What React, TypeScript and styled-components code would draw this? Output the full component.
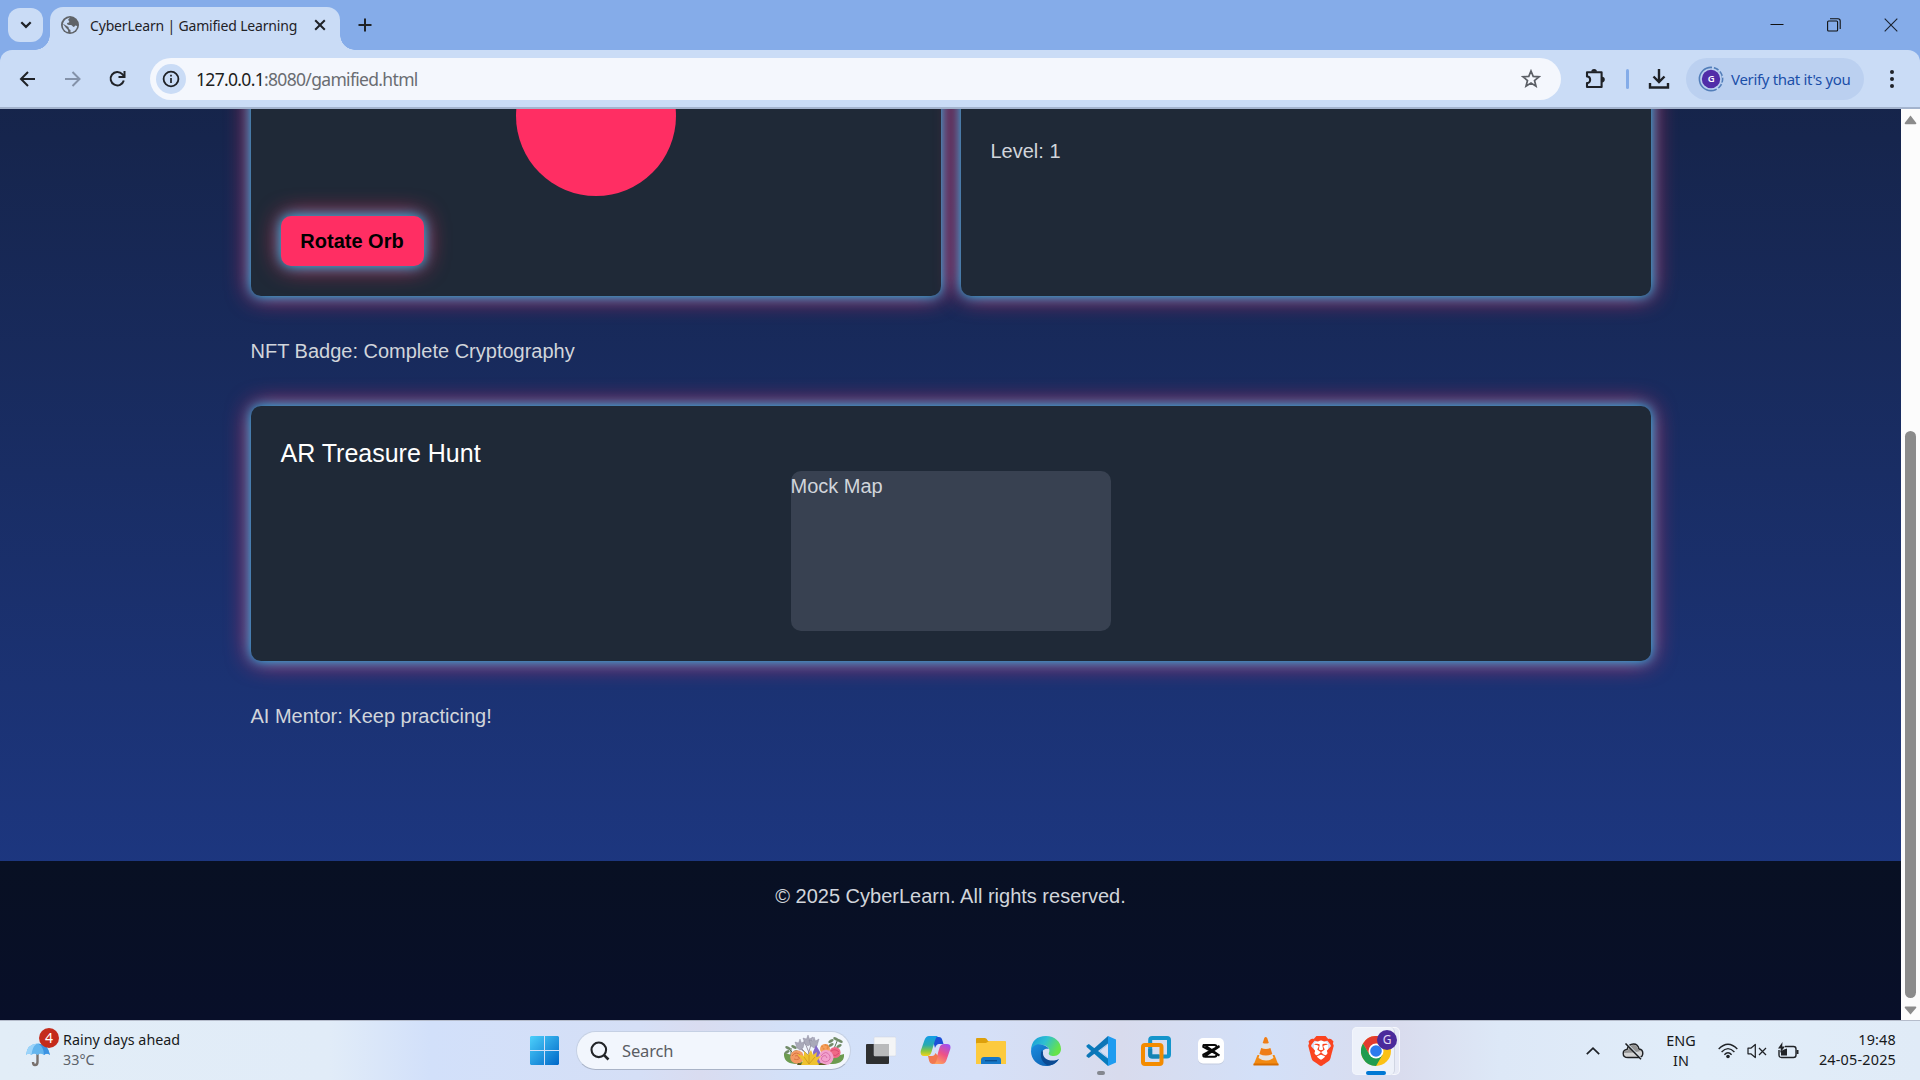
import React from "react";
import styled, { createGlobalStyle } from "styled-components";
import { SiBrave } from "react-icons/si";

const GlobalStyle = createGlobalStyle`
  * { box-sizing: border-box; }
  html, body { margin: 0; padding: 0; overflow: hidden; }
  p, h3 { margin: 0; }
  svg { display: block; flex: none; }
`;

const ui = `"Noto Sans", "Open Sans", sans-serif`;
const web = `"Liberation Sans", Arial, sans-serif`;

const Screen = styled.div`
  width: 1920px;
  height: 1080px;
  display: flex;
  flex-direction: column;
  overflow: hidden;
  font-family: ${ui};
`;

/* Tab strip */
const TabStrip = styled.header`
  height: 50px;
  flex: none;
  display: flex;
  align-items: flex-start;
  background: #85ace9;
  padding: 7px 0 0 8px;
`;
const TabSearch = styled.div`
  width: 35px;
  height: 34px;
  margin-top: 1px;
  border-radius: 12px;
  background: #cadcf6;
  display: grid;
  place-items: center;
`;
const Tab = styled.div`
  position: relative;
  margin-left: 7px;
  width: 290px;
  height: 43px;
  border-radius: 13px 13px 0 0;
  background: #cadcf6;
  display: flex;
  align-items: center;
  padding: 0 14px 7px 11px;
  &::before,
  &::after {
    content: "";
    position: absolute;
    bottom: 0;
    width: 15px;
    height: 15px;
  }
  &::before {
    left: -15px;
    background: radial-gradient(circle at 0 0, transparent 14.5px, #cadcf6 15px);
  }
  &::after {
    right: -15px;
    background: radial-gradient(circle at 100% 0, transparent 14.5px, #cadcf6 15px);
  }
`;
const TabTitle = styled.span`
  flex: 1;
  margin-left: 11px;
  padding-top: 1px;
  font-size: 14px;
  letter-spacing: -0.18px;
  line-height: 20px;
  color: #1f2227;
  white-space: nowrap;
`;
const NewTab = styled.div`
  margin: 11px 0 0 18px;
`;
const WindowButtons = styled.div`
  margin-left: auto;
  margin-right: 1px;
  display: flex;
  width: 171px;
  height: 35px;
`;
const WindowButton = styled.div`
  width: 57px;
  height: 35px;
  display: grid;
  place-items: center;
`;

/* Toolbar */
const ToolbarBack = styled.div`
  height: 59px;
  flex: none;
  background: #85ace9;
`;
const Toolbar = styled.div`
  height: 59px;
  background: #cadcf6;
  border-radius: 12px 12px 0 0;
  border-bottom: 2px solid #a3b3cd;
  display: flex;
  align-items: center;
  padding: 0 18px;
`;
const NavButtons = styled.div`
  width: 132px;
  display: flex;
  gap: 25px;
`;
const AddressBar = styled.div`
  width: 1411px;
  height: 42px;
  margin-top: 1px;
  border-radius: 21px;
  background: #f4f7fd;
  display: flex;
  align-items: center;
  padding: 0 20px 0 6px;
`;
const SiteInfo = styled.div`
  width: 30px;
  height: 30px;
  border-radius: 50%;
  background: #cadcf6;
  display: grid;
  place-items: center;
`;
const Url = styled.div`
  flex: 1;
  margin-left: 10px;
  font-size: 17.5px;
  letter-spacing: -0.68px;
  line-height: 24px;
  color: #6a6d72;
  white-space: nowrap;
`;
const UrlHost = styled.span`
  color: #1c1e21;
`;
const ToolbarDivider = styled.div`
  width: 3px;
  height: 20px;
  border-radius: 2px;
  background: #84ace8;
  margin: 0 19px 0 20px;
`;
const ProfileChip = styled.div`
  width: 178px;
  height: 42px;
  border-radius: 21px;
  background: #bbd0f0;
  margin-left: 16px;
  display: flex;
  align-items: center;
  padding-left: 12px;
  gap: 7px;
  font-size: 15px;
  letter-spacing: -0.32px;
  color: #1c4fa8;
  white-space: nowrap;
`;

/* Page */
const Viewport = styled.div`
  height: 911px;
  flex: none;
  display: flex;
  overflow: hidden;
`;
const Page = styled.div`
  width: 1901px;
  display: flex;
  flex-direction: column;
  overflow: hidden;
  background: linear-gradient(to bottom, #111827 -519px, #1e3a8a 911px);
  font-family: ${web};
  font-size: 20px;
  line-height: 30px;
  color: #d1d5db;
`;
const Main = styled.main`
  width: 1400px;
  height: 752px;
  flex: none;
  margin: 0 auto;
`;
const CardRow = styled.section`
  display: grid;
  grid-template-columns: 1fr 1fr;
  gap: 20px;
  margin-top: -123px;
`;
const glow = `0 0 12.5px #00d4ff, 0 0 25px #ff2e63`;
const Card = styled.article<{ $height: number }>`
  height: ${(p) => p.$height}px;
  padding: 30px;
  border-radius: 10px;
  background: #1f2937;
  box-shadow: ${glow};
`;
const Orb = styled.div`
  width: 160px;
  height: 160px;
  margin: 20px auto;
  border-radius: 50%;
  background: #ff2e63;
`;
const OrbButton = styled.button`
  display: block;
  width: 143px;
  height: 50px;
  padding: 0;
  border: 0;
  border-radius: 10px;
  background: #ff2e63;
  box-shadow: ${glow};
  font: bold 20px/30px ${web};
  color: #000;
`;
const Level = styled.p`
  margin-top: 120px;
`;
const Note = styled.p`
  margin: 40px 0;
`;
const CardTitle = styled.h3`
  font-size: 25px;
  font-weight: 400;
  line-height: 35px;
  color: #fff;
`;
const MockMap = styled.div`
  width: 320px;
  height: 160px;
  margin: 0 auto;
  border-radius: 10px;
  background: #384151;
`;
const Footer = styled.footer`
  flex: 1;
  padding-top: 20px;
  text-align: center;
  background: linear-gradient(#081023, #080f29);
`;

const Scrollbar = styled.div`
  width: 19px;
  background: #fcfcfc;
  display: flex;
  flex-direction: column;
  align-items: center;
  padding: 6px 0 5px;
`;
const ScrollThumb = styled.div`
  width: 11px;
  height: 567px;
  margin: auto 0 8px;
  border-radius: 6px;
  background: #8b8b8b;
`;

/* Taskbar */
const Taskbar = styled.footer`
  height: 60px;
  flex: none;
  border-top: 1px solid #b5bccb;
  display: flex;
  align-items: center;
  padding: 0 24px;
  background: linear-gradient(
    90deg,
    #e2edf7 0,
    #e1ecf8 330px,
    #d2e0fa 430px,
    #d5dff6 640px,
    #d9dcf0 700px,
    #d2e1f9 800px,
    #d5e0f8 980px,
    #d8dbed 1120px,
    #d3e0f8 1260px,
    #d9dcee 1400px,
    #dde8f7 1500px,
    #e1edf9 1700px,
    #e0ebf7 1920px
  );
`;
const Weather = styled.div`
  width: 496px;
  height: 59px;
  display: flex;
  align-items: center;
  gap: 3px;
  padding-bottom: 1px;
`;
const WeatherIcon = styled.div`
  position: relative;
  width: 36px;
  height: 48px;
  padding-top: 16px;
`;
const WeatherBadge = styled.div`
  position: absolute;
  left: 15px;
  top: 2px;
  width: 20px;
  height: 20px;
  border-radius: 50%;
  background: #c42b1c;
  color: #fff;
  font-size: 14px;
  line-height: 20px;
  text-align: center;
`;
const WeatherText = styled.div<{ $muted?: boolean }>`
  font-size: 14.3px;
  line-height: 20px;
  letter-spacing: 0.02px;
  color: ${(p) => (p.$muted ? "#5c6269" : "#17191b")};
  white-space: nowrap;
`;
const TaskCell = styled.div<{ $active?: boolean }>`
  position: relative;
  width: ${(p) => (p.$active ? 48 : 55)}px;
  height: 48px;
  flex: none;
  display: grid;
  place-items: center;
`;
const ActiveTile = styled.div`
  width: 48px;
  height: 48px;
  display: grid;
  border-radius: 5px;
  background: rgba(240, 243, 251, 0.6);
  border: 1px solid rgba(255, 255, 255, 0.65);
`;
const FrontTile = styled.div`
  width: 43px;
  height: 48px;
  margin: -1px 0 0 -1px;
  padding: 9px 0 0 9px;
  border-radius: 5px;
  background: rgba(240, 243, 251, 0.7);
  border-right: 1px solid #d0d5e2;
`;
const RunMark = styled.i<{ $active?: boolean }>`
  position: absolute;
  bottom: 0;
  left: 50%;
  width: ${(p) => (p.$active ? 20 : 8)}px;
  height: 4px;
  transform: translateX(-50%);
  border-radius: 2px;
  background: ${(p) => (p.$active ? "#0078d4" : "#84878f")};
`;
const Account = styled.div`
  position: absolute;
  right: 3px;
  top: 3px;
  width: 20px;
  height: 20px;
  border-radius: 50%;
  background: #4b2a9b;
  color: #e4dcf5;
  font-size: 12px;
  line-height: 20px;
  text-align: center;
`;
const SearchBox = styled.div`
  width: 275px;
  height: 39px;
  flex: none;
  margin: 0 2px 0 7px;
  border-radius: 20px;
  background: #f2f6fd;
  border: 1px solid #c5d0e4;
  border-bottom-color: #a9b3c7;
  display: flex;
  align-items: center;
  padding: 0 5px 0 13px;
  overflow: hidden;
`;
const SearchText = styled.span`
  flex: 1;
  margin-left: 12px;
  font-size: 16.5px;
  letter-spacing: -0.15px;
  line-height: 24px;
  color: #5a5d63;
`;
const StartCell = styled.div`
  width: 49px;
  height: 48px;
  flex: none;
  display: grid;
  place-items: center;
`;
const Tray = styled.div`
  margin-left: auto;
  display: flex;
  align-items: center;
  height: 59px;
`;
const TrayGap = styled.div<{ $w: number }>`
  width: ${(p) => p.$w}px;
  display: grid;
  place-items: center;
`;
const TrayText = styled.div<{ $right?: boolean; $w: number }>`
  width: ${(p) => p.$w}px;
  font-size: 14.4px;
  letter-spacing: ${(p) => (p.$right ? "0.2px" : "0")};
  line-height: 20px;
  padding-bottom: ${(p) => (p.$right ? 2 : 0)}px;
  text-align: ${(p) => (p.$right ? "right" : "center")};
  color: #17191b;
  white-space: nowrap;
`;

const line = { fill: "none", stroke: "#1f2227", strokeWidth: 2 } as const;

const Globe = () => (
  <svg width="18" height="18" viewBox="0 0 18 18">
    <circle cx="9" cy="9" r="9" fill="#5f6368" />
    <path d="M9.3 1.8 C7 2.6 6.8 4 8 5 C9 6 7.5 7 6 7 C6 9 7.5 9 9.5 9 C11.5 9 11.5 11 13 11 L14.3 9.5 L16.2 10 C15.5 14 12.5 16.3 9.5 16.3 L9.5 14 C8 13.5 7.5 12 7.5 11 L2 7.8 C1 11.5 3.8 15.8 7.2 16.1 L7 14 C5.5 12.5 4 10.5 2 8 C3 4 6 1.8 9.3 1.8Z" fill="#cadcf6" />
  </svg>
);
const Back = () => (
  <svg width="20" height="20" viewBox="0 0 20 20" {...line}>
    <path d="M17 10H3M10 3L3 10L10 17" />
  </svg>
);
const Forward = () => (
  <svg width="20" height="20" viewBox="0 0 20 20" fill="none" stroke="#8492a9" strokeWidth="2">
    <path d="M2 10H16M9.5 3L16.5 10L9.5 17" />
  </svg>
);
const Reload = () => (
  <svg width="20" height="20" viewBox="0 0 20 20" {...line}>
    <path d="M15.8 11.5A6.7 6.7 0 1 1 14.3 5.2L16.5 7.4" />
    <path d="M16.5 2V8H10.5" />
  </svg>
);
const Info = () => (
  <svg width="18" height="18" viewBox="0 0 18 18">
    <circle cx="9" cy="9" r="7.4" fill="none" stroke="#1f2227" strokeWidth="1.8" />
    <path d="M9 8V13M9 4.8V6.6" stroke="#1f2227" strokeWidth="1.7" />
  </svg>
);
const Star = () => (
  <svg width="20" height="20" viewBox="0 0 20 20">
    <path d="M10 2L12.2 7.4L18 7.8L13.5 11.5L15 17.2L10 14.1L5 17.2L6.5 11.5L2 7.8L7.8 7.4Z" fill="none" stroke="#5b5f66" strokeWidth="1.7" />
  </svg>
);
const Puzzle = () => (
  <svg width="22" height="22" viewBox="0 0 22 22">
    <path d="M3 4.3H17.6V19H3V15.1C7.2 15.2 7.2 8.5 3 8.5Z" fill="none" stroke="#1f2227" strokeWidth="2.1" strokeLinejoin="round" />
    <path d="M7.3 3.8A2.8 2.8 0 0 1 12.9 3.8ZM18 8.8A2.8 2.8 0 0 1 18 14.4Z" fill="#1f2227" />
  </svg>
);
const Download = () => (
  <svg width="22" height="22" viewBox="0 0 22 22" fill="none" stroke="#1f2227" strokeWidth="2.4">
    <path d="M11 1V13.5M5.5 8.5L11 14L16.5 8.5M2 15V19.5H20V15" />
  </svg>
);
const Avatar = () => (
  <svg width="26" height="26" viewBox="0 0 26 26">
    <circle cx="13" cy="13" r="11.6" fill="none" stroke="#527eb9" strokeWidth="1.6" />
    <path d="M14 1.4A11.6 11.6 0 0 1 14 24.6" fill="none" stroke="#bbd0f0" strokeWidth="3" strokeDasharray="2 5.3" />
    <circle cx="13" cy="13" r="9.2" fill="#512da8" />
    <text x="13" y="16.4" textAnchor="middle" fontSize="9.5" fontWeight="600" fill="#fff" fontFamily="Noto Sans, sans-serif">G</text>
  </svg>
);
const Menu = () => (
  <svg width="6" height="20" viewBox="0 0 6 20" fill="#1f2227">
    <circle cx="3" cy="3" r="2" />
    <circle cx="3" cy="10" r="2" />
    <circle cx="3" cy="17" r="2" />
  </svg>
);

const Umbrella = () => (
  <svg width="28" height="28" viewBox="0 0 28 28">
    <path d="M13.5 10V20Q13.5 23 11 23Q9 23 9 20" fill="none" stroke="#78716e" strokeWidth="2.4" />
    <path d="M2 13Q3 2 13.5 1.5Q24 2 26 13Q23 10.5 20 13Q16.5 10.5 13.5 13Q10 10.5 7.5 13Q4.5 10.5 2 13Z" fill="#63b5ee" />
    <path d="M2 13Q3 2 13 1.5Q8 5 7.5 13Q4.5 10.5 2 13Z" fill="#9bd4fa" />
    <path d="M14 1.5Q24 2 26 13Q23 10.5 20 13Q20 5 14 1.5Z" fill="#3c93e2" />
  </svg>
);
const WindowsLogo = () => (
  <svg width="29" height="29" viewBox="0 0 29 29">
    <defs>
      <linearGradient id="win" x1="0" y1="0" x2="1" y2="1">
        <stop offset="0" stopColor="#4cd0fb" />
        <stop offset="1" stopColor="#0067c8" />
      </linearGradient>
    </defs>
    <path d="M1 0H14V14H0V1ZM15 0H28L29 1V14H15ZM0 15H14V29H1L0 28ZM15 15H29V28L28 29H15Z" fill="url(#win)" />
  </svg>
);
const Magnifier = () => (
  <svg width="20" height="20" viewBox="0 0 20 20" fill="none" stroke="#222428" strokeWidth="2.1">
    <circle cx="8.8" cy="8.8" r="7.3" />
    <path d="M13.8 13.8L18.5 18.5" strokeWidth="2.6" />
  </svg>
);
const petals = [0, 30, 60, 90, 120, 150];
const Flowers = () => (
  <svg width="62" height="32" viewBox="0 0 62 32">
    <path d="M1 18Q0 28 12 29L22 29Q14 20 1 18ZM61 19Q62 28 50 29L40 29Q48 22 61 19Z" fill="#6c9b50" />
    <path d="M8 21L8 13M50 16L55 4M14 22L5 13" stroke="#5a7355" strokeWidth="1" />
    {[[5, 13], [11, 12], [4, 17], [12, 17], [48, 6], [57, 6], [48, 10], [56, 11], [53, 4]].map(([x, y]) => (
      <ellipse key={`${x}-${y}`} cx={x} cy={y} rx="3" ry="1.5" fill="#718b68" transform={`rotate(${x % 2 ? 25 : -30} ${x} ${y})`} />
    ))}
    <path d="M17 12L25 20L29 6M22 8L27 20M14 11L25 20" stroke="#837b8b" strokeWidth="0.8" fill="none" />
    {[[17, 9], [25, 5], [31, 7]].map(([x, y]) => (
      <path key={x} d={`M${x} ${y - 5}L${x + 1.5} ${y - 1}L${x + 5} ${y - 3}L${x + 3} ${y + 4}L${x} ${y + 6}L${x - 3} ${y + 4}L${x - 5} ${y - 2}L${x - 1.5} ${y - 1}Z`} fill="#a9a9b9" stroke="#85849a" strokeWidth="0.4" />
    ))}
    <path d="M31 28L30 17L33 10L37 17L38 28Z" fill="#8369c8" />
    <circle cx="42" cy="14" r="5" fill="#f5a15f" />
    <circle cx="52" cy="17.5" r="5.6" fill="#ef6986" />
    <path d="M48 16Q52 13 56 17M49 20Q53 22 56 18" stroke="#d94a70" fill="none" />
    <circle cx="14" cy="22" r="6.8" fill="#f39a64" />
    <path d="M9 21Q13 15 18 21Q16 26 11 24M12 21Q15 19 16 23" stroke="#d9743f" fill="none" />
    <circle cx="43" cy="22.5" r="7.5" fill="#f2a1cc" />
    <path d="M38 21Q43 14 47 21Q48 26 42 27Q36 25 40 21Q43 19 44 23" stroke="#d870a8" fill="none" />
    <path d="M15 28Q27 30 38 28L44 30H14Z" fill="#5b5a20" />
    <path d="M14 19L21 21L21 16L25 20L28 15L30 20L34 17L33 22L38 21L34 26L36 30H18L20 26Z" fill="#eec22f" />
    <path d="M26 29L21 22M26 29L26 20M26 29L32 22" stroke="#cb951e" strokeWidth="0.8" />
    {petals.map((a) => (
      <circle key={a} cx={42 + 3 * Math.cos(a)} cy={12 + 2 * Math.sin(a)} r="1" fill="#e98b42" />
    ))}
  </svg>
);
const TaskView = () => (
  <svg width="30" height="30" viewBox="0 0 30 30">
    <rect x="0" y="8" width="23" height="20" rx="1" fill="#2e2f30" />
    <rect x="8" y="1" width="22" height="19" rx="1" fill="#f4f5f6" stroke="#cfd3dc" strokeWidth="0.5" />
    <path d="M8 8H23V20H8Z" fill="#b9babb" />
  </svg>
);
const Copilot = () => (
  <svg width="31" height="29" viewBox="0 0 31 29">
    <defs>
      <linearGradient id="cpA" x1="0" y1="0" x2="0" y2="1">
        <stop offset="0" stopColor="#139ce8" />
        <stop offset=".45" stopColor="#27aab0" />
        <stop offset=".75" stopColor="#8bc83e" />
        <stop offset="1" stopColor="#f3d21c" />
      </linearGradient>
      <linearGradient id="cpB" x1=".8" y1="0" x2=".3" y2="1">
        <stop offset="0" stopColor="#a04ff0" />
        <stop offset=".5" stopColor="#ee5286" />
        <stop offset="1" stopColor="#ffa05b" />
      </linearGradient>
    </defs>
    <path d="M12 1H19Q21.5 1 22.3 4L23.5 8H19Q16.5 8 15 12Z" fill="#1b50d8" />
    <path d="M9 0H18Q15.8 1 14.8 5L11.5 16Q10.3 20 7.5 20H4Q0 20 .7 15L4.5 4Q6 0 9 0Z" fill="url(#cpA)" />
    <path d="M22 28H13Q15.3 27 16.3 23L19.4 12Q20.5 8 24 8H27Q31.3 8 30.3 13L26.5 24Q25.3 28 22 28Z" fill="url(#cpB)" />
    <path d="M8 20H12Q14.5 20 15.5 17L18 20L16 26Q15 28 13 28Q10 28 9.2 25Z" fill="#f27850" />
  </svg>
);
const Folder = () => (
  <svg width="30" height="28" viewBox="0 0 30 28">
    <path d="M0 2Q0 1 1 1H9Q10.5 1 12 4H28Q30 4 30 6V20H0Z" fill="#dda00b" />
    <path d="M0 7Q0 6 1 6H10L13 4H29Q30 4 30 6V27H0Z" fill="#fcca3e" />
    <path d="M5 27V23Q5 20 8 20H22Q25 20 25 23V27Z" fill="#1678c8" />
    <path d="M9 23.7H21" stroke="#0b4f8e" strokeWidth="1.3" />
  </svg>
);
const Edge = () => (
  <svg width="30" height="30" viewBox="0 0 30 30">
    <defs>
      <linearGradient id="edA" x1="0" y1="0" x2="1" y2=".4">
        <stop offset="0" stopColor="#1598d9" />
        <stop offset=".5" stopColor="#2ebfd2" />
        <stop offset="1" stopColor="#67e34a" />
      </linearGradient>
      <linearGradient id="edB" x1="0" y1="0" x2="1" y2="1">
        <stop offset="0" stopColor="#1b8de0" />
        <stop offset="1" stopColor="#0c58a8" />
      </linearGradient>
    </defs>
    <path d="M0 15C0 5 6 0 15 0C24 0 30 6 30 13C30 17 27 20 23 20C19 20 17 18.5 18 16.5C19.5 13 17 10 12 9C7 8 2 10 0 15Z" fill="url(#edA)" />
    <path d="M0 15C1 9 7 7 12 9C15 10 17 11 18 13C13 12 11 15 11 18C11 26 21 28 28 23C25 28 20 30 15 30C6 30 0 23 0 15Z" fill="url(#edB)" />
    <path d="M11 14C8 20 11 28 18 29.6C22 29 26 26 28 23C20 27 11 23 12 16Z" fill="#0b4a92" />
  </svg>
);
const VsCode = () => (
  <svg width="30" height="30" viewBox="0 0 30 30">
    <path d="M.5 9.5L2.8 8L24 24L22 30L.6 11Z" fill="#087bbd" />
    <path d="M.5 20.5L2.8 22L24 6L22 0L.6 19Z" fill="#0c75b7" />
    <path d="M22 0L30 3.5V26.5L22 30V21.5L13.5 15L22 8.5Z" fill="#1f9cf0" />
    <path d="M22 8.5V21.5L13.5 15Z" fill="#d7def2" />
  </svg>
);
const Vmware = () => (
  <svg width="30" height="30" viewBox="0 0 30 30" fill="none" strokeWidth="4">
    <rect x="9.2" y="2" width="18.8" height="18.5" rx="2" stroke="#1595cb" />
    <rect x="2" y="9" width="18.5" height="19" rx="2" stroke="#f38b00" />
    <path d="M9.2 13V18.5Q9.2 20.5 11.2 20.5H18" stroke="#1583b4" />
  </svg>
);
const CapCut = () => (
  <svg width="28" height="28" viewBox="0 0 28 28">
    <rect x="1" y="1.5" width="26" height="26" rx="5" fill="#aab1c1" opacity=".4" />
    <rect x="1" y="1" width="26" height="25.5" rx="5" fill="#fff" />
    <path d="M22.5 9.5L8 19.2Q6.3 20.2 6.3 18.5V17.5L22.5 9M22.5 18.5L8 8.3Q6.3 7.2 6.3 9V10L22.5 18.5M7.5 8H17.5Q19.5 8 19.5 10M7.5 19.7H17.5Q19.5 19.7 19.5 17.7" fill="none" stroke="#090909" strokeWidth="2" />
  </svg>
);
const Vlc = () => (
  <svg width="26" height="30" viewBox="0 0 26 30">
    <path d="M4.5 19H21.5L25.5 29H.5Z" fill="#f28a13" />
    <path d="M.5 27.5H25.5V29.5H.5Z" fill="#d76c00" />
    <path d="M11.3 2Q12.5 0 14.2 2L20.5 22Q13 27 5.5 22Z" fill="#e4e3e4" />
    <path d="M11.3 2Q12.5 0 14.2 2L15.8 7Q12.8 8 9.7 7ZM8.2 12Q13 14 17.4 12L19.3 18Q13 21 6.4 18Z" fill="#ef7d16" />
  </svg>
);
const Brave = () => (
  <svg width="30" height="30" viewBox="0 0 30 30">
    <path d="M8 7L15 4L22 7L22 17L15 25L8 17Z" fill="#fff" />
    <SiBrave size={30} color="#fb4420" />
  </svg>
);
const Chrome = () => (
  <svg width="30" height="30" viewBox="0 0 30 30">
    <circle cx="15" cy="15" r="15" fill="#fbc116" />
    <path d="M2 7.5A15 15 0 0 1 28 7.5H15L8.5 18.7Z" fill="#e33b2e" />
    <path d="M2 7.5A15 15 0 0 0 15 30L21.5 18.7L8.5 18.7Z" fill="#209c50" />
    <circle cx="15" cy="15" r="7.5" fill="#fff" />
    <circle cx="15" cy="15" r="5.8" fill="#2c7bee" />
  </svg>
);

const CloudOff = () => (
  <svg width="22" height="18" viewBox="0 0 22 18">
    <path d="M6 15.5Q1.2 15.5 1.2 11.5Q1.2 8 5 7.5Q6.5 2 11.5 2Q16 2 17 7Q20.8 7.5 20.8 11.3Q20.8 15.5 16.5 15.5Z" fill="#d2d2d2" stroke="#1d1f22" strokeWidth="1.4" />
    <path d="M2 11Q2 8 6 8.5Q7 3 11.5 3Q15.3 3 16.3 7.5L18.5 9L12 10.5Z" fill="#939393" />
    <path d="M5.2 2L19.8 17" stroke="#e1edf8" strokeWidth="1.4" />
    <path d="M3.5 1.5L19 17.3" stroke="#1d1f22" strokeWidth="1.6" />
  </svg>
);
const Wifi = () => (
  <svg width="20" height="16" viewBox="0 0 20 16" fill="none" stroke="#202327" strokeWidth="1.4">
    <path d="M.7 6Q10-3.6 19.3 6M3.6 9Q10 2.3 16.4 9M6.4 11.7Q10 7.8 13.6 11.7" />
    <circle cx="10" cy="13.5" r="1.8" fill="#202327" stroke="none" />
  </svg>
);
const Muted = () => (
  <svg width="20" height="16" viewBox="0 0 20 16" fill="none" stroke="#202327" strokeWidth="1.25">
    <path d="M1 5.2H3.8L8.3 1.5V14.5L3.8 10.8H1Z" strokeLinejoin="round" />
    <path d="M12 5L19 12M19 5L12 12" />
  </svg>
);
const Battery = () => (
  <svg width="21" height="18" viewBox="0 0 21 18">
    <path d="M7 4.5H15.5Q18 4.5 18 7V13Q18 15.5 15.5 15.5H3.5Q1 15.5 1 13V8" fill="none" stroke="#202327" strokeWidth="1.4" />
    <path d="M3 9L6 7.5L9 6.5V13.5H3ZM18.5 8H20.5V12H18.5Z" fill="#202327" />
    <path d="M4.5 0L0 6.5H3L2 11L7 4.5H4.2Z" fill="#202327" />
  </svg>
);

const apps: { name: string; icon: React.ReactNode; running?: boolean }[] = [
  { name: "task-view", icon: <TaskView /> },
  { name: "copilot", icon: <Copilot /> },
  { name: "explorer", icon: <Folder /> },
  { name: "edge", icon: <Edge /> },
  { name: "vscode", icon: <VsCode />, running: true },
  { name: "vmware", icon: <Vmware /> },
  { name: "capcut", icon: <CapCut /> },
  { name: "vlc", icon: <Vlc /> },
  { name: "brave", icon: <Brave /> },
];

export default function App() {
  return (
    <Screen>
      <GlobalStyle />
      <TabStrip>
        <TabSearch>
          <svg width="12" height="8" viewBox="0 0 12 8" {...line} strokeWidth="2.2">
            <path d="M1.3 1.2L6 5.9L10.7 1.2" />
          </svg>
        </TabSearch>
        <Tab>
          <Globe />
          <TabTitle>CyberLearn | Gamified Learning</TabTitle>
          <svg width="12" height="12" viewBox="0 0 12 12" {...line}>
            <path d="M1.2 1.2L10.8 10.8M10.8 1.2L1.2 10.8" />
          </svg>
        </Tab>
        <NewTab>
          <svg width="14" height="14" viewBox="0 0 14 14" {...line}>
            <path d="M7 .5V13.5M.5 7H13.5" />
          </svg>
        </NewTab>
        <WindowButtons>
          <WindowButton>
            <svg width="14" height="14" viewBox="0 0 14 14">
              <path d="M.5 6.5H13.5" stroke="#111" />
            </svg>
          </WindowButton>
          <WindowButton>
            <svg width="14" height="14" viewBox="0 0 14 14" fill="none" stroke="#111" strokeWidth="1.1">
              <rect x=".6" y="3" width="10" height="10" rx="1" />
              <path d="M3 .8H11Q13.2 .8 13.2 3V11" />
            </svg>
          </WindowButton>
          <WindowButton>
            <svg width="14" height="14" viewBox="0 0 14 14" stroke="#1a2230" strokeWidth="1.1">
              <path d="M.7 .7L13.3 13.3M13.3 .7L.7 13.3" />
            </svg>
          </WindowButton>
        </WindowButtons>
      </TabStrip>
      <ToolbarBack>
        <Toolbar>
          <NavButtons>
            <Back />
            <Forward />
            <Reload />
          </NavButtons>
          <AddressBar>
            <SiteInfo>
              <Info />
            </SiteInfo>
            <Url>
              <UrlHost>127.0.0.1</UrlHost>:8080/gamified.html
            </Url>
            <Star />
          </AddressBar>
          <TrayGap $w={23} />
          <Puzzle />
          <ToolbarDivider />
          <Download />
          <ProfileChip>
            <Avatar />
            Verify that it's you
          </ProfileChip>
          <TrayGap $w={25} />
          <Menu />
        </Toolbar>
      </ToolbarBack>

      <Viewport>
        <Page>
          <Main>
            <CardRow>
              <Card $height={310}>
                <Orb />
                <OrbButton>Rotate Orb</OrbButton>
              </Card>
              <Card $height={310}>
                <Level>Level: 1</Level>
              </Card>
            </CardRow>
            <Note>NFT Badge: Complete Cryptography</Note>
            <Card $height={255}>
              <CardTitle>AR Treasure Hunt</CardTitle>
              <MockMap>Mock Map</MockMap>
            </Card>
            <Note>AI Mentor: Keep practicing!</Note>
          </Main>
          <Footer>© 2025 CyberLearn. All rights reserved.</Footer>
        </Page>
        <Scrollbar>
          <svg width="13" height="10" viewBox="0 0 13 10">
            <path d="M6.5 .5L12.3 8Q12.5 9.3 11.3 9.3H1.7Q.5 9.3 .7 8Z" fill="#8b8b8b" />
          </svg>
          <ScrollThumb />
          <svg width="13" height="9" viewBox="0 0 13 9">
            <path d="M6.5 8.5L.7 1.8Q.5 .6 1.7 .6H11.3Q12.5 .6 12.3 1.8Z" fill="#8b8b8b" />
          </svg>
        </Scrollbar>
      </Viewport>

      <Taskbar>
        <Weather>
          <WeatherIcon>
            <Umbrella />
            <WeatherBadge>4</WeatherBadge>
          </WeatherIcon>
          <div>
            <WeatherText>Rainy days ahead</WeatherText>
            <WeatherText $muted>33°C</WeatherText>
          </div>
        </Weather>
        <StartCell>
          <WindowsLogo />
        </StartCell>
        <SearchBox>
          <Magnifier />
          <SearchText>Search</SearchText>
          <Flowers />
        </SearchBox>
        {apps.map((app) => (
          <TaskCell key={app.name}>
            {app.icon}
            {app.running && <RunMark />}
          </TaskCell>
        ))}
        <TrayGap $w={4} />
        <TaskCell $active>
          <ActiveTile>
            <FrontTile>
              <Chrome />
            </FrontTile>
          </ActiveTile>
          <Account>G</Account>
          <RunMark $active />
        </TaskCell>
        <Tray>
          <TrayGap $w={16}>
            <svg width="14" height="8" viewBox="0 0 14 8" {...line} strokeWidth="1.7">
              <path d="M.8 7.2L7 1.2L13.2 7.2" />
            </svg>
          </TrayGap>
          <TrayGap $w={64}>
            <CloudOff />
          </TrayGap>
          <TrayText $w={32}>
            ENG
            <br />
            IN
          </TrayText>
          <TrayGap $w={21} />
          <Wifi />
          <TrayGap $w={9} />
          <Muted />
          <TrayGap $w={42}>
            <Battery />
          </TrayGap>
          <TrayText $w={87} $right>
            19:48
            <br />
            24-05-2025
          </TrayText>
        </Tray>
      </Taskbar>
    </Screen>
  );
}
